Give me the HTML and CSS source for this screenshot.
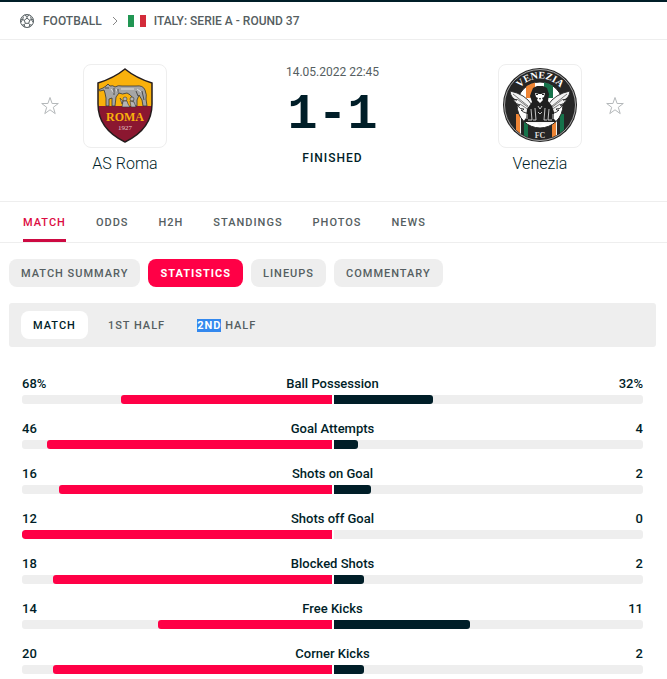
FILE: index.html
```html
<!DOCTYPE html>
<html lang="en">
<head>
<meta charset="utf-8">
<meta name="viewport" content="width=device-width, initial-scale=1">
<title>AS Roma - Venezia</title>
<link rel="stylesheet" href="styles.css">
</head>
<body>
<nav class="breadcrumb">
  <svg class="ball" viewBox="0 0 16 16" fill="none" stroke="currentColor" aria-hidden="true">
    <circle cx="8" cy="8" r="6.5"/>
    <path d="M8 5.2l2.7 2-1 3.1H6.3l-1-3.1zM8 5.2V3.5M10.700 7.200l1.700-.6M9.700 10.300l1.100 1.500M6.300 10.300l-1.100 1.500M5.300 7.200l-1.700-.6M5.500 2.100L8 3.500l2.500-1.400M14.200 6.200l-1.800.4-.8-3M12.900 12.100l-2.100-.3-.8 2.400M3.100 12.100l2.100-.3.8 2.400M1.800 6.200l1.800.4.8-3M12.400 6.600l1.800 2.700M3.600 6.600L1.800 9.300"/>
  </svg>
  <a href="#">FOOTBALL</a>
  <svg class="chevron" viewBox="0 0 6 10" fill="none" stroke="currentColor" aria-hidden="true"><path d="M1 1l4 4-4 4"/></svg>
  <svg class="flag" viewBox="0 0 18 12" aria-hidden="true"><path fill="#fff" d="M0 0h18v12H0z"/><path fill="#219653" d="M0 0h6v12H0z"/><path fill="#d32b3a" d="M12 0h6v12h-6z"/></svg>
  <a href="#">ITALY: SERIE A - ROUND 37</a>
</nav>

<main>
<section class="duel">
  <button class="star" aria-label="Follow AS Roma"><svg viewBox="0 0 20 20" fill="none" stroke="currentColor"><path d="M10 1.500l2.100 6h6.200l-5 3.800 1.900 6.300-5.200-3.800-5.200 3.800 1.900-6.300-5-3.800h6.200z"/></svg></button>
  <div class="team">
    <div class="crest">
      <svg viewBox="1 1 82 82" role="img" aria-label="AS Roma crest">
        <defs><clipPath id="shield"><path d="M42 5Q31 14 15 19V40Q15 65 42 78Q69 65 69 40V19Q53 14 42 5Z"/></clipPath></defs>
        <g clip-path="url(#shield)">
          <path fill="#f9b10c" d="M10 0h64v42H10z"/>
          <path fill="#8b1730" d="M10 42h64v42H10z"/>
        </g>
        <path fill="none" stroke="#251d1d" stroke-width="1.500" d="M42 5Q31 14 15 19V40Q15 65 42 78Q69 65 69 40V19Q53 14 42 5Z"/>
        <path fill="#a5a5a5" stroke="#353535" stroke-width=".8" d="M20 24l3-2 2-2 2 2q3-1 5 1 3-2 7-1h14q7-1 9 4 2 5 1 9l1 7h-4l-1-6-3-5-2 5v6h-4v-8q-3-4-6-5-5 2-8 0l-3 4-1 9h-3v-8l-3 1v7h-3v-8q-1-6-2-8l-4 1-2-1z"/>
        <path fill="none" stroke="#e0e0e0" d="M28 25l3 4M33 25l2 4M38 25h13M54 25l4 3"/>
        <path fill="none" stroke="#353535" stroke-width=".8" d="M22 24h4M31 24v7M35 25v4M53 27l2 5M59 27l2 9"/>
        <g fill="#b5b5b5" stroke="#353535" stroke-width=".6">
          <circle cx="42" cy="35" r="2"/><circle cx="49" cy="35" r="2"/>
          <path d="M40 37h4l1 3 2 3h-8zM47 37l4 1 2 5h-5zM37 34l3 3-1 3z"/>
        </g>
        <text class="roma-name" x="42" y="57">ROMA</text>
        <text class="roma-year" x="42" y="66">1927</text>
      </svg>
    </div>
    <a class="team-name" href="#">AS Roma</a>
  </div>
  <div class="result">
    <time datetime="2022-05-14T22:45">14.05.2022 22:45</time>
    <strong class="score">1-1</strong>
    <span class="status">FINISHED</span>
  </div>
  <div class="team">
    <div class="crest">
      <svg viewBox="1 1 82 82" role="img" aria-label="Venezia crest">
        <defs>
          <clipPath id="round"><circle cx="42" cy="41" r="34.500"/></clipPath>
          <clipPath id="inner"><circle cx="42" cy="41" r="23"/></clipPath>
          <path id="arc" d="M15.500 41A26.500 26.500 0 0 1 68.500 41"/>
        </defs>
        <circle cx="42" cy="41" r="37" fill="#252525"/>
        <circle cx="42" cy="41" r="35.500" fill="none" stroke="#c8c8c8" stroke-width=".8"/>
        <g clip-path="url(#round)">
          <path fill="#ee8434" d="M18 50h4v26h-4zM54 50h4v26h-4z"/>
          <path fill="#eee" d="M22 50h1v26h-1zM58 50h1v26h-1z"/>
          <path fill="#16734b" d="M26 50h4v26h-4zM62 50h4v26h-4z"/>
        </g>
        <circle cx="42" cy="41" r="23" fill="#fff" stroke="#252525"/>
        <g clip-path="url(#inner)">
          <path fill="#ee8434" d="M28 14h9v20h-9z"/><path fill="#16734b" d="M46 14h9v20h-9z"/>
        </g>
        <path fill="#f3f3f3" stroke="#252525" stroke-width=".9" d="M34 41q-7-11-22-14 1 8 7 9-2 0-4-1 3 6 7 6-2 1-3 0 3 5 7 4-1 2-3 1 5 5 10 2zM50 41q7-11 22-14-1 8-7 9 2 0 4-1-3 6-7 6 2 1 3 0-3 5-7 4 1 2 3 1-5 5-10 2z"/>
        <path fill="none" stroke="#454545" stroke-width=".7" d="M15 30l15 12M19 35l12 9M22 40l9 6M69 30L54 42M65 35l-12 9M62 40l-9 6"/>
        <path fill="#202020" d="M33 29l2-5 4-2h6l4 2 2 6-1 7 4 5 2 6v7l3 3H25l3-4 1-9 5-7-2-6z"/>
        <path fill="#fff" d="M37 29l4 1h2l4-1-1 4-2 1 1 2-3 3-3-3 1-2-2-1z"/>
        <path fill="#202020" d="M38 30h2v1h-2zM44 30h2v1h-2zM41 34h2l-1 2z"/>
        <path fill="none" stroke="#eee" stroke-width=".8" d="M33 45l1 11h-4M37 44l1 12h-3M47 44l-1 12h3M51 45l-1 11h4M29 50v5M55 50v5M40 42l2 3 2-3M40 48l2 2 2-2"/>
        <path fill="#f3f3f3" d="M28 58h28l-4 2-7-1-3 3-3-3-7 1z"/>
        <text class="venezia-name"><textPath href="#arc" startOffset="50%">VENEZIA</textPath></text>
        <text class="venezia-fc" x="42" y="74">FC</text>
      </svg>
    </div>
    <a class="team-name" href="#">Venezia</a>
  </div>
  <button class="star" aria-label="Follow Venezia"><svg viewBox="0 0 20 20" fill="none" stroke="currentColor"><path d="M10 1.500l2.100 6h6.200l-5 3.800 1.900 6.300-5.200-3.800-5.200 3.800 1.900-6.300-5-3.800h6.200z"/></svg></button>
</section>

<nav class="tabs">
  <a class="active" href="#">MATCH</a>
  <a href="#">ODDS</a>
  <a href="#">H2H</a>
  <a href="#">STANDINGS</a>
  <a href="#">PHOTOS</a>
  <a href="#">NEWS</a>
</nav>

<div class="content">
  <div class="pills">
    <button class="pill">MATCH SUMMARY</button>
    <button class="pill current">STATISTICS</button>
    <button class="pill">LINEUPS</button>
    <button class="pill">COMMENTARY</button>
  </div>
  <div class="periods">
    <button class="period selected">MATCH</button>
    <button class="period">1ST HALF</button>
    <button class="period"><span class="highlight">2ND</span> HALF</button>
  </div>
  <section class="stats">
    <div class="stat"><div class="labels"><span>68%</span><span>Ball Possession</span><span>32%</span></div><div class="bars"><div class="track home"><div class="fill" style="width:68%"></div></div><div class="track away"><div class="fill" style="width:32%"></div></div></div></div>
    <div class="stat"><div class="labels"><span>46</span><span>Goal Attempts</span><span>4</span></div><div class="bars"><div class="track home"><div class="fill" style="width:92%"></div></div><div class="track away"><div class="fill" style="width:8%"></div></div></div></div>
    <div class="stat"><div class="labels"><span>16</span><span>Shots on Goal</span><span>2</span></div><div class="bars"><div class="track home"><div class="fill" style="width:88%"></div></div><div class="track away"><div class="fill" style="width:12%"></div></div></div></div>
    <div class="stat"><div class="labels"><span>12</span><span>Shots off Goal</span><span>0</span></div><div class="bars"><div class="track home"><div class="fill" style="width:100%"></div></div><div class="track away"><div class="fill" style="width:0%"></div></div></div></div>
    <div class="stat"><div class="labels"><span>18</span><span>Blocked Shots</span><span>2</span></div><div class="bars"><div class="track home"><div class="fill" style="width:90%"></div></div><div class="track away"><div class="fill" style="width:10%"></div></div></div></div>
    <div class="stat"><div class="labels"><span>14</span><span>Free Kicks</span><span>11</span></div><div class="bars"><div class="track home"><div class="fill" style="width:56%"></div></div><div class="track away"><div class="fill" style="width:44%"></div></div></div></div>
    <div class="stat"><div class="labels"><span>20</span><span>Corner Kicks</span><span>2</span></div><div class="bars"><div class="track home"><div class="fill" style="width:90%"></div></div><div class="track away"><div class="fill" style="width:10%"></div></div></div></div>
  </section>
</div>
</main>
</body>
</html>
```
FILE: styles.css
```css
* { box-sizing: border-box; }

body {
  margin: 0;
  border-top: 2px solid #001e28;
  background: #fff;
  color: #001e28;
  font-family: Roboto, "Liberation Sans", sans-serif;
  font-size: 12px;
  font-weight: 500;
  line-height: 16px;
}

a { color: inherit; text-decoration: none; }

button {
  border: 0;
  padding: 0;
  background: none;
  color: inherit;
  font: inherit;
  cursor: pointer;
}

svg { display: block; }

.breadcrumb {
  display: flex;
  align-items: center;
  gap: 8px;
  height: 38px;
  padding: 0 19px;
  border-bottom: 1px solid #eee;
  color: #555e61;
}
.ball { width: 16px; height: 16px; }
.chevron { width: 6px; height: 10px; margin: 0 2px; color: #888; }
.flag { width: 18px; height: 12px; }

.duel {
  display: grid;
  grid-template-columns: 20px 84px 1fr 84px 20px;
  column-gap: 23px;
  padding: 24px 42px 27px 40px;
}
.star { width: 20px; height: 84px; color: #b4b8ba; }
.team { display: flex; flex-direction: column; align-items: center; gap: 6px; }
.crest { width: 84px; height: 84px; border: 1px solid #eee; border-radius: 8px; }
.team-name { font-size: 16px; font-weight: 300; line-height: 20px; white-space: nowrap; }
.roma-name { font: bold 12px "Liberation Serif", serif; fill: #f9b10c; text-anchor: middle; }
.roma-year { font: 7px "Liberation Serif", serif; fill: #e3c7c9; text-anchor: middle; }
.venezia-name { font: bold 10px "Liberation Serif", serif; fill: #fff; text-anchor: middle; }
.venezia-fc { font: bold 8px "Liberation Serif", serif; fill: #ddd; text-anchor: middle; }

.result { display: flex; flex-direction: column; align-items: center; }
.result time { color: #555e61; font-weight: 400; }
.score { margin: 7px 0; font: bold 50px/56px "Liberation Mono", monospace; }
.status { letter-spacing: 1px; }

.tabs {
  display: flex;
  gap: 30px;
  padding: 0 23px;
  border: solid #eee;
  border-width: 1px 0;
  color: #555e61;
  font-size: 11px;
}
.tabs a { padding: 13px 0 8px; border-bottom: 3px solid transparent; letter-spacing: 1px; }
.tabs .active { border-color: #cd0a42; border-radius: 2px 2px 0 0; color: #dc0c42; }

.content { padding: 16px 11px 0 9px; }
.pills { display: flex; gap: 8px; }
.pill, .period {
  height: 28px;
  padding: 1px 12px 0;
  border-radius: 8px;
  color: #555e61;
  font-size: 11px;
  letter-spacing: 1px;
}
.pill { background: #eee; }
.current { background: #ff0046; color: #fff; font-weight: 700; }

.periods {
  display: flex;
  gap: 8px;
  margin-top: 16px;
  padding: 8px 12px;
  border-radius: 3px;
  background: #eee;
}
.selected { background: #fff; color: #001e28; }
.highlight { background: #3388ee; color: #fff; font-weight: 700; }

.stats { display: grid; gap: 15px; padding: 27px 13px 4px; }
.labels { display: grid; grid-template-columns: 1fr auto 1fr; line-height: 20px; margin-bottom: 1px; font-size: 13px; }
.labels :last-child { text-align: right; }
.bars { display: grid; grid-template-columns: 1fr 1fr; gap: 2px; }
.track { display: flex; height: 9px; background: #eee; overflow: hidden; }
.home { justify-content: flex-end; border-radius: 3px 0 0 3px; }
.away { border-radius: 0 3px 3px 0; }
.home .fill { background: #ff0046; border-radius: 3px 0 0 3px; }
.away .fill { background: #001e28; border-radius: 0 3px 3px 0; }
```
